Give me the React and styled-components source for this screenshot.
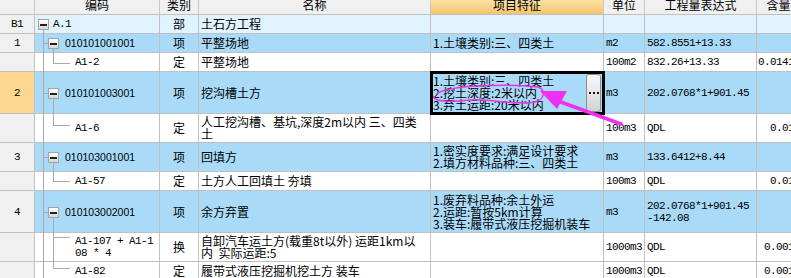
import React from 'react';
import styled, { createGlobalStyle, css } from 'styled-components';

const GlobalStyle = createGlobalStyle`
  html, body {
    margin: 0;
    padding: 0;
    background: #fff;
    overflow: hidden;
  }

  body {
    font-family: 'Noto Sans CJK SC', sans-serif;
    font-size: 12px;
    color: #000;
  }
`;

// grid columns: row no, code, type, name, features, unit, expression, quantity
const COLS = '35px 125px 39px 232px 173px 41px 112px 44px';

const fonts = {
  cjk: css`
    font-family: 'Noto Sans CJK SC', 'Noto Sans', sans-serif;
    font-size: 12px;
  `,
  mono: css`
    font-family: 'Liberation Mono', 'Noto Sans CJK SC', monospace;
    font-size: 11px;
    letter-spacing: -0.6px;
  `,
  sans: css`
    font-family: 'Liberation Sans', Arial, sans-serif;
    font-size: 10.5px;
  `,
};

const fills = {
  head: '#f0f0f0',
  headActive: 'linear-gradient(#fbe1a4, #f2c46e)',
  no: '#f0f0f0',
  noActive: '#fdd68f',
  part: '#e1f3fe',
  item: '#a9dbf8',
  quota: '#ffffff',
};

const Sheet = styled.div`
  position: relative;
  width: 801px;
`;

const Row = styled.div`
  display: grid;
  grid-template-columns: ${COLS};
  height: ${(p) => p.$h}px;
`;

const Cell = styled.div`
  box-sizing: border-box;
  display: flex;
  align-items: center;
  justify-content: ${(p) =>
    p.$align === 'center' ? 'center' : p.$align === 'right' ? 'flex-end' : 'flex-start'};
  padding: 0 ${(p) => (p.$align === 'right' ? 6 : 0)}px 0 ${(p) => (p.$align === 'left' ? 2 : 0)}px;
  background: ${(p) => fills[p.$fill]};
  border-right: 1px solid #c0c0c0;
  border-bottom: 1px solid #c0c0c0;
  overflow: hidden;
  white-space: pre;
`;

const HeadCell = styled(Cell)`
  align-items: flex-end;
  padding: 0 0 4px;
  border-right-color: #c9c9c9;
`;

const TreeCell = styled(Cell)`
  position: relative;
  overflow: visible;
  padding-left: ${(p) => p.$indent}px;
`;

const FeatCell = styled(Cell)`
  ${(p) =>
    p.$selected &&
    css`
      position: relative;
      z-index: 2;
      overflow: visible;
      outline: 3px solid #000;
      outline-offset: -2px;
      align-items: stretch;
    `}
`;

const Text = styled.div`
  ${(p) => fonts[p.$font || 'cjk']}
  line-height: 12px;
  white-space: pre;
  align-self: center;
  flex: ${(p) => (p.$grow ? 1 : 'none')};
`;

const VLine = styled.span`
  position: absolute;
  left: ${(p) => p.$x}px;
  top: ${(p) => p.$top};
  bottom: ${(p) => p.$bottom};
  width: 1px;
  background: #a9a9a9;
`;

const HLine = styled.span`
  position: absolute;
  left: ${(p) => p.$x}px;
  top: ${(p) => p.$y};
  width: ${(p) => p.$w}px;
  height: 1px;
  background: #a9a9a9;
`;

const Toggle = styled.span`
  position: absolute;
  left: ${(p) => p.$x}px;
  top: 50%;
  margin-top: -5px;
  width: 11px;
  height: 11px;
  box-sizing: border-box;
  border: 1px solid #a4a4a4;
  background: linear-gradient(#ffffff, #d6d6d6);

  &::after {
    content: '';
    position: absolute;
    left: 1px;
    top: 4px;
    width: 7px;
    height: 2px;
    background: #222;
  }
`;

const EllipsisButton = styled.div`
  box-sizing: border-box;
  width: 15px;
  margin: 2px 2px 1px 0;
  display: flex;
  align-items: center;
  justify-content: center;
  gap: 2px;
  border: 1px solid #8e8e8e;
  border-radius: 3px;
  background: linear-gradient(#fafafa, #d2d2d2);

  span {
    width: 2px;
    height: 2px;
    background: #111;
  }
`;

const Markup = styled.svg`
  position: absolute;
  top: 0;
  left: 0;
  z-index: 5;
  pointer-events: none;
`;

const header = [
  { label: '' },
  { label: '编码' },
  { label: '类别' },
  { label: '名称' },
  { label: '项目特征', active: true },
  { label: '单位' },
  { label: '工程量表达式' },
  { label: '含量' },
];

const rows = [
  { no: 'B1', level: 0, kind: 'part', code: ['A.1'], type: '部', name: ['土石方工程'], h: 19 },
  {
    no: '1', level: 1, kind: 'item', code: ['010101001001'], type: '项', name: ['平整场地'],
    feat: ['1.土壤类别:三、四类土'], unit: 'm2', expr: ['582.8551+13.33'], h: 19,
  },
  {
    level: 2, kind: 'quota', code: ['A1-2'], type: '定', name: ['平整场地'],
    unit: '100m2', expr: ['832.26+13.33'], qty: '0.0141', h: 19, tick: 10, last: true,
  },
  {
    no: '2', level: 1, kind: 'item', active: true, selected: true, code: ['010101003001'], type: '项',
    name: ['挖沟槽土方'], feat: ['1.土壤类别:三、四类土', '2.挖土深度:2米以内', '3.弃土运距:20米以内'],
    unit: 'm3', expr: ['202.0768*1+901.45'], h: 42,
  },
  {
    level: 2, kind: 'quota', code: ['A1-6'], type: '定', name: ['人工挖沟槽、基坑,深度2m以内 三、四类', '土'],
    unit: '100m3', expr: ['QDL'], qty: '0.01', h: 29, tick: 11, last: true,
  },
  {
    no: '3', level: 1, kind: 'item', code: ['010103001001'], type: '项', name: ['回填方'],
    feat: ['1.密实度要求:满足设计要求', '2.填方材料品种:三、四类土'], unit: 'm3', expr: ['133.6412+8.44'], h: 29,
  },
  {
    level: 2, kind: 'quota', code: ['A1-57'], type: '定', name: ['土方人工回填土 夯填'],
    unit: '100m3', expr: ['QDL'], qty: '0.01', h: 19, tick: 9, last: true,
  },
  {
    no: '4', level: 1, kind: 'item', code: ['010103002001'], type: '项', name: ['余方弃置'],
    feat: ['1.废弃料品种:余土外运', '2.运距:暂按5km计算', '3.装车:履带式液压挖掘机装车'],
    unit: 'm3', expr: ['202.0768*1+901.45', '-142.08'], h: 42,
  },
  {
    level: 2, kind: 'quota', code: ['A1-107 + A1-1', '08 * 4'], type: '换',
    name: ['自卸汽车运土方(载重8t以外) 运距1km以', '内  实际运距:5'],
    unit: '1000m3', expr: ['QDL'], qty: '0.001', h: 29, tick: 4, last: false,
  },
  {
    level: 2, kind: 'quota', code: ['A1-82'], type: '定', name: ['履带式液压挖掘机挖土方 装车'],
    unit: '1000m3', expr: ['QDL'], qty: '0.001', h: 19, tick: 6, last: true,
  },
];

const indent = [18, 30, 40];
const codeFont = ['mono', 'sans', 'mono'];

const lines = (list) => (list || []).join('\n');

const CodeCell = ({ row }) => (
  <TreeCell $fill={row.kind} $indent={indent[row.level]}>
    {row.level === 0 && (
      <>
        <Toggle $x={3} />
        <VLine $x={8} $top='calc(50% + 6px)' $bottom='-1px' />
      </>
    )}
    {row.level === 1 && (
      <>
        <VLine $x={8} $top='-1px' $bottom='-1px' />
        <HLine $x={8} $y='calc(50% + 0px)' $w={5} />
        <Toggle $x={13} />
        <VLine $x={18} $top='calc(50% + 6px)' $bottom='-1px' />
      </>
    )}
    {row.level === 2 && (
      <>
        <VLine $x={8} $top='-1px' $bottom='-1px' />
        <VLine
          $x={18}
          $top='-1px'
          $bottom={row.last ? `calc(100% - ${row.tick}px)` : '-1px'}
        />
        <HLine $x={18} $y={`${row.tick}px`} $w={17} />
      </>
    )}
    <Text $font={codeFont[row.level]}>{lines(row.code)}</Text>
  </TreeCell>
);

const BillRow = ({ row }) => (
  <Row $h={row.h}>
    <Cell $fill={row.active ? 'noActive' : 'no'} $align='center'>
      <Text $font='mono'>{row.no || ''}</Text>
    </Cell>
    <CodeCell row={row} />
    <Cell $fill={row.kind} $align='center'>
      <Text>{row.type}</Text>
    </Cell>
    <Cell $fill={row.kind} $align='left'>
      <Text>{lines(row.name)}</Text>
    </Cell>
    <FeatCell $fill={row.kind} $align='left' $selected={row.selected}>
      <Text $grow>{lines(row.feat)}</Text>
      {row.selected && (
        <EllipsisButton>
          <span />
          <span />
          <span />
        </EllipsisButton>
      )}
    </FeatCell>
    <Cell $fill={row.kind} $align='left'>
      <Text $font='mono'>{row.unit || ''}</Text>
    </Cell>
    <Cell $fill={row.kind} $align='left'>
      <Text $font='mono'>{lines(row.expr)}</Text>
    </Cell>
    <Cell $fill={row.kind} $align='right'>
      <Text $font='mono'>{row.qty || ''}</Text>
    </Cell>
  </Row>
);

const App = () => {
  return (
    <>
      <GlobalStyle />
      <Sheet>
        <Row $h={15}>
          {header.map((h, i) => (
            <HeadCell key={i} $fill={h.active ? 'headActive' : 'head'} $align='center'>
              <Text>{h.label}</Text>
            </HeadCell>
          ))}
        </Row>
        {rows.map((row, i) => (
          <BillRow key={i} row={row} />
        ))}

        {/* hand-drawn annotation over the selected cell */}
        <Markup width='791' height='278' viewBox='0 0 791 278'>
          <path
            d='M437 94 C445 86, 500 83, 538 87 C546 90, 545 99, 535 102 C515 106, 490 98, 470 100 C452 102, 432 102, 434 96'
            fill='none'
            stroke='#f030f0'
            strokeWidth='1.5'
          />
          <line x1='621' y1='124' x2='558' y2='101' stroke='#f030f0' strokeWidth='3.5' strokeLinecap='round' />
          <polygon points='540,91 567,91 557,109' fill='#f030f0' />
        </Markup>
      </Sheet>
    </>
  );
};

export default App;
